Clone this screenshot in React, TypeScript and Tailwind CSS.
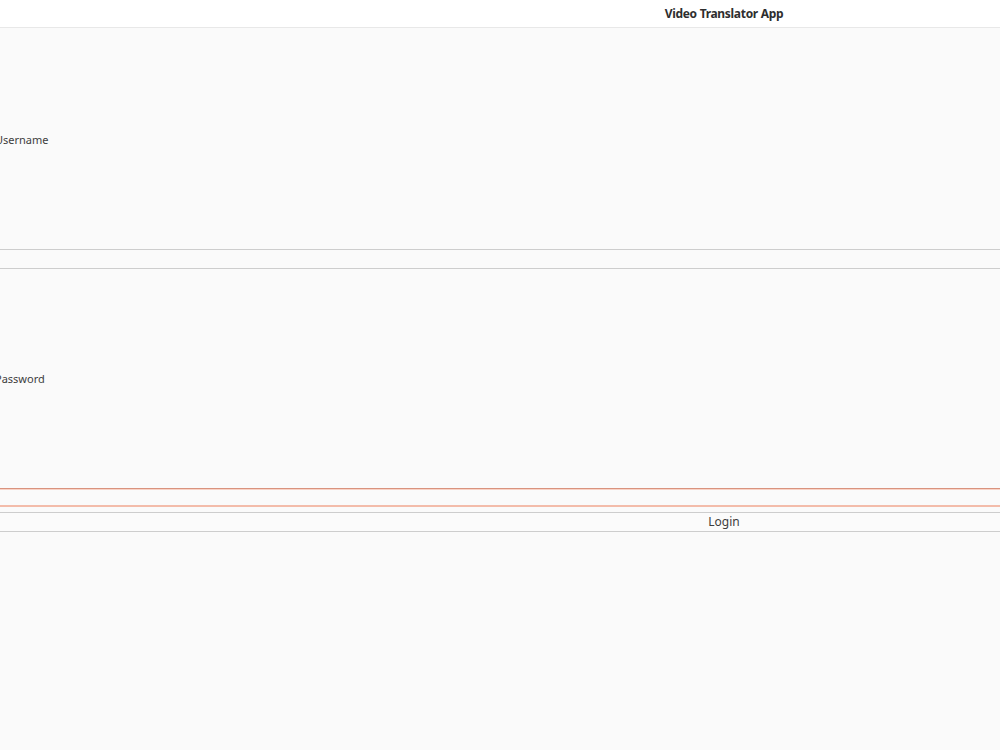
import React from 'react';

// GTK-style login window, wider than the viewport and clipped at both sides
const App = () => {
    return (
        <div className="w-screen h-screen overflow-hidden bg-[#fafafa] font-['Noto_Sans',sans-serif] text-[#3d3d3d]">
            {/* Header bar */}
            <div className="w-[1448px] h-[28px] bg-white border-b border-[#e8e8e8] flex items-center justify-center">
                <span className="text-[12px] font-bold tracking-[-0.3px] text-[#2e2e2e] leading-none">Video Translator App</span>
            </div>

            {/* Form body */}
            <div className="ml-[-5px] w-[1458px] flex flex-col">
                <div className="h-[221px] pt-[3px] flex items-center text-[11px]">Username</div>
                <div className="h-[20px] bg-[#fafafa] border-y border-[#cdcdcd]" />
                <div className="h-[219px] pt-[2px] flex items-center text-[11px]">Password</div>
                <div className="h-[19px] bg-[#fafafa] border-t border-b-2 border-t-[#d9937e] border-b-[#f3bcaa] shadow-[inset_0_1px_0_#f8d3c7]" />
                <div className="h-[5px]" />
                <button className="h-[20px] bg-[#fbfbfb] border-y border-[#cdcdcd] text-[12px] flex items-center justify-center leading-none">
                    Login
                </button>
            </div>
        </div>
    );
};

export default App;
